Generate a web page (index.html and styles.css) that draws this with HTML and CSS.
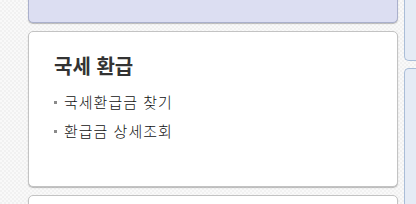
FILE: index.html
```html
<!DOCTYPE html>
<html lang="ko">
<head>
    <meta charset="UTF-8">
    <title>국세 환급</title>
    <link rel="stylesheet" href="styles.css">
</head>
<body>
    <div class="page">
        <div class="main-col">
            <div class="box box-top"></div>
            <div class="box box-refund">
                <h2 class="box-title">국세 환급</h2>
                <ul class="link-list">
                    <li><a href="#">국세환급금 찾기</a></li>
                    <li><a href="#">환급금 상세조회</a></li>
                </ul>
            </div>
            <div class="box box-next"></div>
        </div>
        <div class="side-col">
            <div class="side-box side-top"></div>
            <div class="side-box side-next"></div>
        </div>
    </div>
</body>
</html>
```

FILE: styles.css
```css
/* 전체 */
html, body {
    margin: 0;
    height: 100%;
    overflow: hidden;
}
body {
    font-family: "Noto Sans CJK KR", "Noto Sans", sans-serif;
    background-color: #f7f7f7;
    background-image: conic-gradient(#f1f1f1 25%, #f9f9f9 0 50%, #f1f1f1 0 75%, #f9f9f9 0);
    background-size: 4px 4px;
}

.page {
    display: flex;
    gap: 6px;
    padding-left: 28px;
}

/* 왼쪽 박스 */
.main-col {
    width: 370px;
    display: flex;
    flex-direction: column;
    gap: 8px;
    margin-top: -20px;
}
.box {
    background: #fff;
    border: 1px solid #c3c3c3;
    border-radius: 5px;
    box-shadow: 0 1px 1px rgba(0,0,0,0.25);
    box-sizing: border-box;
}
.box-top {
    height: 43px;
    background: #dcdef2;
    border-color: #aab0cc;
}
.box-refund {
    height: 156px;
    padding: 21px 25px 0;
}
.box-next {
    height: 40px;
}

.box-title {
    margin: 0 0 8px;
    font-size: 20px;
    font-weight: bold;
    color: #333;
    line-height: 26px;
}

.link-list {
    list-style: none;
    margin: 0;
    padding: 0;
}
.link-list li {
    position: relative;
    padding-left: 10px;
    font-size: 15px;
    font-weight: 300;
    letter-spacing: 1px;
    line-height: 29px;
}
.link-list li::before {
    content: "";
    position: absolute;
    left: 0;
    top: 14px;
    width: 3px;
    height: 3px;
    background: #8a8a8a;
}
.link-list a {
    color: #111;
    text-decoration: none;
}

/* 오른쪽 박스 */
.side-col {
    flex: 1;
    display: flex;
    flex-direction: column;
    gap: 7px;
    margin-top: -20px;
}
.side-box {
    background: #e5ebf5;
    border: 1px solid #a9bdd8;
    border-right: 0;
    border-radius: 5px 0 0 5px;
    box-sizing: border-box;
}
.side-top {
    height: 81px;
}
.side-next {
    height: 200px;
}
```
